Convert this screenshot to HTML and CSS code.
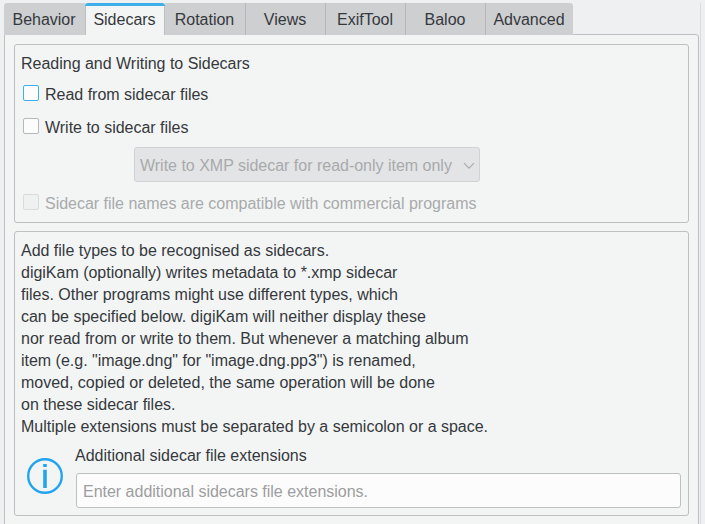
FILE: index.html
```
<!DOCTYPE html>
<html lang="en">
<head>
<meta charset="utf-8">
<title>Sidecars</title>
<link rel="stylesheet" href="styles.css">
</head>
<body>
<main class="page">
  <nav class="tabs">
    <div class="tab tab-first"><span>Behavior</span></div>
    <div class="tab tab-active"><span>Sidecars</span></div>
    <div class="tab"><span>Rotation</span></div>
    <div class="tab"><span>Views</span></div>
    <div class="tab"><span>ExifTool</span></div>
    <div class="tab"><span>Baloo</span></div>
    <div class="tab tab-last"><span>Advanced</span></div>
  </nav>
  <div class="panel">
    <section class="group group-rw">
      <div class="title"><span>Reading and Writing to Sidecars</span></div>
      <label class="check check-focus"><i class="box"></i><span>Read from sidecar files</span></label>
      <label class="check check-write"><i class="box"></i><span>Write to sidecar files</span></label>
      <div class="combo">
        <span>Write to XMP sidecar for read-only item only</span>
        <svg width="12" height="8" viewBox="0 0 12 8"><path d="M1 1.2 6 6.2 11 1.2" fill="none" stroke="#a8aaac" stroke-width="1.1"/></svg>
      </div>
      <label class="check check-off"><i class="box"></i><span>Sidecar file names are compatible with commercial programs</span></label>
    </section>
    <section class="group group-ext">
      <p class="text">
        <span>Add file types to be recognised as sidecars.</span>
        <span>digiKam (optionally) writes metadata to *.xmp sidecar</span>
        <span>files. Other programs might use different types, which</span>
        <span>can be specified below. digiKam will neither display these</span>
        <span>nor read from or write to them. But whenever a matching album</span>
        <span>item (e.g. "image.dng" for "image.dng.pp3") is renamed,</span>
        <span>moved, copied or deleted, the same operation will be done</span>
        <span>on these sidecar files.</span>
        <span>Multiple extensions must be separated by a semicolon or a space.</span>
      </p>
      <div class="extension">
        <svg class="info" width="36" height="36" viewBox="0 0 36 36"><circle cx="18" cy="18" r="16.8" fill="none" stroke="#22a4f1" stroke-width="2.4"/><path d="M16.2 6h3.6v3h-3.6zM16.2 11.8h3.6v18.2h-3.6z" fill="#22a4f1"/></svg>
        <div class="field">
          <div class="field-label"><span>Additional sidecar file extensions</span></div>
          <div class="input"><span>Enter additional sidecars file extensions.</span></div>
        </div>
      </div>
    </section>
  </div>
</main>
</body>
</html>
```
FILE: styles.css
```
* { box-sizing: border-box; }
body {
  margin: 0;
  background: #eff0f2;
  color: #35393d;
  font: 16px/22px "Liberation Sans", Arial, sans-serif;
  letter-spacing: -0.012px;
}
.page {
  width: 701px;
  height: 524px;
  padding: 3px 1px 0 4px;
  overflow: hidden;
  background: linear-gradient(#dcddde, #dcddde) 700px 3px / 1px 100% no-repeat;
}
span { white-space: nowrap; }
.tabs {
  display: grid;
  grid-template-columns: 81px 80px 81px 80px 80px 80px 87px;
  height: 31px;
}
.tab {
  display: flex;
  justify-content: center;
  padding: 6px 1px 0 0;
  background: #cecfd1;
  border-right: 1px solid #b5b7b9;
}
.tab-first { border-radius: 3px 0 0; border-right: 0; }
.tab-last { border-radius: 0 3px 0 0; border-right: 0; }
.tab-active {
  height: 32px;
  z-index: 1;
  padding-top: 3px;
  background: #f3f5f4;
  border-top: 3px solid #3daee9;
  border-right: 0;
  border-radius: 3px 3px 0 0;
  box-shadow: inset 1px 0 #bdbfc0, inset -1px 0 #bdbfc0;
}
.panel {
  width: 695px;
  height: 500px;
  padding: 9px;
  background: #f3f5f4;
  border: 1px solid #bdbfc0;
  border-radius: 0 3px 0 0;
}
.group {
  width: 675px;
  border: 1px solid #bdbfc0;
  border-radius: 3px;
}
.group-rw { height: 179px; padding: 8px 0 0 8px; }
.title { height: 22px; margin-left: -2px; }
.check {
  display: flex;
  align-items: flex-start;
  height: 22px;
  margin-top: 9px;
}
.box {
  width: 16px;
  height: 16px;
  margin: 1px 6px 0 0;
  background: #fcfcfc;
  border: 1px solid #b5b7b8;
  border-radius: 2px;
}
.check-focus .box { border-color: #3daee9; }
.check-write { margin-top: 11px; }
.check-off { margin-top: 11px; color: #a8aaac; }
.check-off .box { background: #eff0f0; border-color: #dadcdc; }
.combo {
  display: flex;
  align-items: center;
  justify-content: space-between;
  width: 346px;
  height: 35px;
  margin: 8px 0 0 111px;
  padding: 2px 4px 0 5px;
  color: #a8aaac;
  background: #e3e4e5;
  border: 1px solid #d0d2d4;
  border-radius: 3px;
}
.group-ext { height: 285px; margin-top: 8px; padding: 8px 7px 0 6px; }
.text { margin: 0; display: flex; flex-direction: column; }
.extension { display: flex; margin-top: 7px; }
.info { display: block; margin: 13px 12px 0 6px; }
.field { flex: 1; }
.field-label { height: 28px; }
.input {
  height: 35px;
  margin-left: 1px;
  padding: 7px 0 0 6px;
  color: #9c9ea0;
  background: #fcfcfc;
  border: 1px solid #bdbfc0;
  border-radius: 3px;
}
```
